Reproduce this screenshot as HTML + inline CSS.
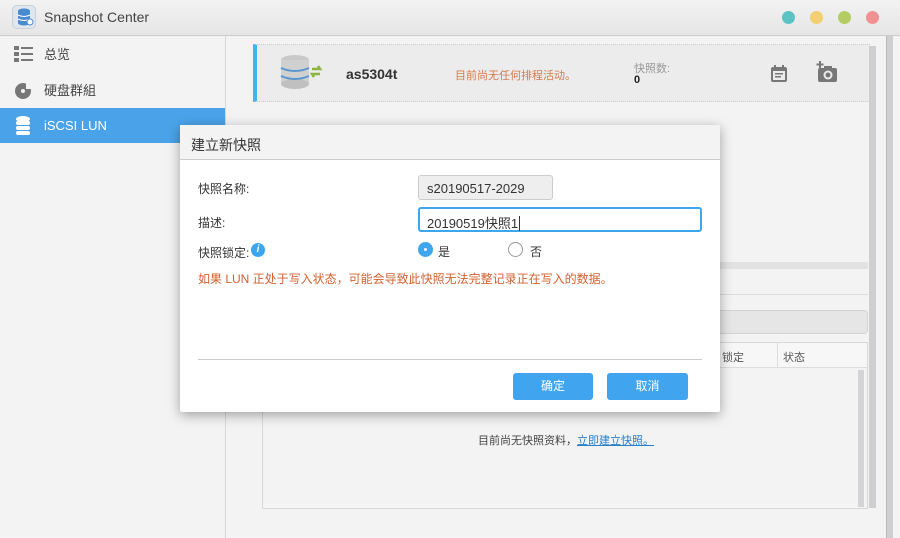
<!DOCTYPE html>
<html><head><meta charset="utf-8"><style>
*{box-sizing:border-box;margin:0;padding:0}
body{width:900px;height:538px;overflow:hidden;font-family:"Liberation Sans","Noto Sans CJK SC",sans-serif;font-size:12px;color:#333;background:#f3f3f3;position:relative}
.abs{position:absolute}
.title{left:0;top:0;width:900px;height:36px;background:linear-gradient(#f2f2f2,#e6e6e6);border-bottom:1px solid #ccc}
.dot{width:13px;height:13px;border-radius:50%;top:11px}
.side{left:0;top:36px;width:226px;height:502px;background:#f3f3f3;border-right:1px solid #d8d8d8}
.item{left:0;width:225px;height:35px;line-height:35px;padding-left:44px;font-size:13px;color:#444}
</style></head><body>
<div class="abs title">
 <div class="abs" style="left:12px;top:5px;width:24px;height:24px;border-radius:5px;background:#dfe6ee;border:1px solid #c8d0da"></div>
 <svg class="abs" style="left:16px;top:8px" width="18" height="19"><ellipse cx="8" cy="3" rx="6" ry="2.5" fill="#4a8ad0"/><rect x="2" y="3" width="12" height="12" fill="#4a8ad0"/><ellipse cx="8" cy="15" rx="6" ry="2.5" fill="#4a8ad0"/><path d="M2 7q6 3 12 0M2 11q6 3 12 0" stroke="#fff" fill="none"/><circle cx="14" cy="14" r="3" fill="#fff" stroke="#4a8ad0"/></svg>
 <div class="abs" style="left:44px;top:9px;font-size:14px;color:#444">Snapshot Center</div>
 <div class="abs dot" style="left:782px;background:#5cc2c4"></div>
 <div class="abs dot" style="left:810px;background:#f1cf72"></div>
 <div class="abs dot" style="left:838px;background:#b3cc63"></div>
 <div class="abs dot" style="left:866px;background:#f29191"></div>
</div>
<div class="abs side">
 <div class="abs item" style="top:1px">总览</div>
 <svg class="abs" style="left:14px;top:10px" width="20" height="16" fill="#777"><rect x="0" y="0" width="5" height="4"/><rect x="0" y="6" width="5" height="4"/><rect x="0" y="12" width="5" height="4"/><rect x="7" y="1" width="12" height="2"/><rect x="7" y="7" width="12" height="2"/><rect x="7" y="13" width="12" height="2"/></svg>
 <div class="abs item" style="top:37px">硬盘群組</div>
 <svg class="abs" style="left:14px;top:46px" width="20" height="18"><circle cx="9" cy="9" r="8" fill="#777"/><circle cx="9" cy="9" r="2" fill="#f3f3f3"/><path d="M12 1a8 8 0 0 1 5 6h-5z" fill="#f3f3f3"/></svg>
 <div class="abs item" style="top:72px;background:#4aa3e8;color:#fff">iSCSI LUN</div>
 <svg class="abs" style="left:15px;top:80px" width="16" height="20"><ellipse cx="8" cy="3" rx="7" ry="3" fill="#fff"/><rect x="1" y="5" width="14" height="4" rx="2" fill="#fff"/><rect x="1" y="10" width="14" height="4" rx="2" fill="#fff"/><rect x="1" y="15" width="14" height="4" rx="2" fill="#fff"/></svg>
</div>
<!-- main -->
<div class="abs" style="left:253px;top:44px;width:617px;height:58px;background:#ececec;border-top:1px dotted #ccc;border-bottom:1px dotted #ccc;border-left:4px solid #3bb7ef"></div>
<svg class="abs" style="left:280px;top:54px" width="48" height="36"><ellipse cx="15" cy="6" rx="14" ry="5" fill="#c9c9c9"/><rect x="1" y="6" width="28" height="24" fill="#d0d0d0"/><ellipse cx="15" cy="30" rx="14" ry="5" fill="#c0c0c0"/><path d="M1 14q14 6 28 0M1 22q14 6 28 0" stroke="#5b95d0" stroke-width="2" fill="none"/><path d="M32 15h8l-2-3M40 20h-8l2 3" stroke="#8bb440" stroke-width="2.5" fill="none"/></svg>
<div class="abs" style="left:346px;top:66px;font-size:14px;font-weight:bold;color:#333">as5304t</div>
<div class="abs" style="left:455px;top:67px;font-size:11px;color:#d67a4a">目前尚无任何排程活动。</div>
<div class="abs" style="left:634px;top:60px;font-size:11px;color:#999">快照数:</div>
<div class="abs" style="left:634px;top:74px;font-size:11px;font-weight:bold;color:#222">0</div>
<svg class="abs" style="left:770px;top:64px" width="18" height="19"><rect x="1" y="3" width="16" height="15" rx="2" fill="#777"/><rect x="3" y="7" width="12" height="9" fill="#ececec"/><rect x="5" y="9" width="8" height="1.5" fill="#777"/><rect x="5" y="12" width="6" height="1.5" fill="#777"/><rect x="4" y="1" width="2" height="4" fill="#777"/><rect x="12" y="1" width="2" height="4" fill="#777"/></svg>
<svg class="abs" style="left:816px;top:61px" width="22" height="22"><rect x="2" y="7" width="19" height="14" rx="2" fill="#777"/><rect x="8" y="5" width="8" height="4" fill="#777"/><circle cx="12" cy="14" r="4.5" fill="#ececec"/><circle cx="12" cy="14" r="2.5" fill="#777"/><path d="M4 0v7M0.5 3.5h7" stroke="#777" stroke-width="2"/></svg>
<div class="abs" style="left:869px;top:46px;width:7px;height:462px;background:#cfcfd2"></div>
<div class="abs" style="left:886px;top:36px;width:7px;height:502px;background:#cfcfd2;border-left:1px solid #bbb"></div>
<div class="abs" style="left:718px;top:262px;width:150px;height:7px;background:#e2e2e2"></div>
<div class="abs" style="left:262px;top:294px;width:606px;height:1px;background:#ddd"></div>
<div class="abs" style="left:262px;top:310px;width:606px;height:24px;background:#e6e6e6;border:1px solid #d4d4d4;border-radius:4px"></div>
<div class="abs" style="left:262px;top:342px;width:606px;height:167px;border:1px solid #d8d8d8;background:#f3f3f3"></div>
<div class="abs" style="left:263px;top:343px;width:604px;height:25px;background:#f7f7f7;border-bottom:1px solid #ddd"></div>
<div class="abs" style="left:777px;top:343px;width:1px;height:25px;background:#ddd"></div>
<div class="abs" style="left:722px;top:349px;font-size:11px;color:#555">锁定</div>
<div class="abs" style="left:783px;top:349px;font-size:11px;color:#555">状态</div>
<div class="abs" style="left:858px;top:370px;width:6px;height:137px;background:#d4d4d6"></div>
<div class="abs" style="left:478px;top:432px;font-size:11px;color:#444">目前尚无快照资料，<span style="color:#2a7ec8;text-decoration:underline">立即建立快照。</span></div>
<!-- dialog -->
<div class="abs" style="left:180px;top:125px;width:540px;height:287px;background:#fff;box-shadow:0 3px 12px rgba(0,0,0,.35);border-radius:2px">
 <div class="abs" style="left:0;top:0;width:540px;height:35px;background:#f3f3f3;border-bottom:1px solid #ccc"></div>
 <div class="abs" style="left:11px;top:10px;font-size:14px;color:#333">建立新快照</div>
 <div class="abs" style="left:18px;top:55px">快照名称:</div>
 <div class="abs" style="left:238px;top:50px;width:135px;height:25px;background:#eee;border:1px solid #ccc;border-radius:3px;padding:5px 8px;font-size:13px">s20190517-2029</div>
 <div class="abs" style="left:18px;top:89px">描述:</div>
 <div class="abs" style="left:238px;top:82px;width:284px;height:25px;border:2px solid #3ea6ec;border-radius:3px;padding:4px 7px;font-size:13px">20190519快照1<span style="border-left:1px solid #333;margin-left:1px"></span></div>
 <div class="abs" style="left:18px;top:119px">快照锁定:</div>
 <div class="abs" style="left:71px;top:118px;width:14px;height:14px;border-radius:50%;background:#3ea6ec;color:#fff;font-size:10px;font-style:italic;font-weight:bold;text-align:center;line-height:14px">i</div>
 <div class="abs" style="left:238px;top:117px;width:15px;height:15px;border-radius:50%;background:#3ea6ec"></div>
 <div class="abs" style="left:244px;top:123px;width:3px;height:3px;border-radius:50%;background:#fff"></div>
 <div class="abs" style="left:258px;top:118px">是</div>
 <div class="abs" style="left:328px;top:117px;width:15px;height:15px;border-radius:50%;border:1px solid #999;background:#fff"></div>
 <div class="abs" style="left:350px;top:118px">否</div>
 <div class="abs" style="left:18px;top:145px;color:#d2612f">如果 LUN 正处于写入状态，可能会导致此快照无法完整记录正在写入的数据。</div>
 <div class="abs" style="left:18px;top:234px;width:504px;height:1px;background:#ccc"></div>
 <div class="abs" style="left:333px;top:248px;width:80px;height:27px;background:#40a5ee;border-radius:3px;color:#fff;text-align:center;line-height:27px">确定</div>
 <div class="abs" style="left:427px;top:248px;width:81px;height:27px;background:#40a5ee;border-radius:3px;color:#fff;text-align:center;line-height:27px">取消</div>
</div>
</body></html>
